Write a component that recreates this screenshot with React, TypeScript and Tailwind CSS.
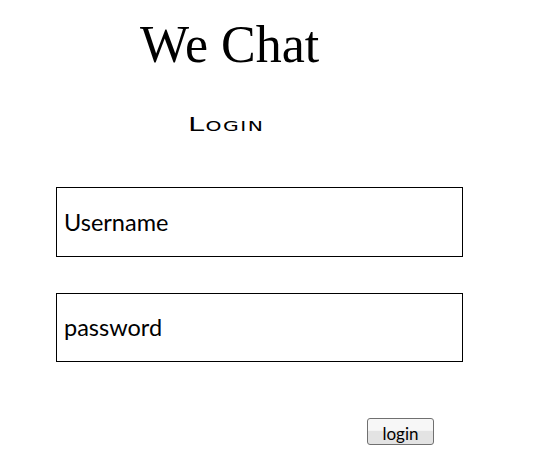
export default function App() {
    return (
        <div className="w-[546px] h-[457px] bg-white text-black">
            <div className="pl-[140px] pt-[15px]">
                <h1 className="font-['Liberation_Serif',serif] text-[52px] leading-[60px]">We Chat</h1>
                <p className="pl-[48px] mt-[37px] h-[24px]">
                    <span className="inline-block origin-left scale-x-[1.45] font-['DejaVu_Sans',sans-serif] text-[20px] leading-[24px] tracking-[1px] [font-variant:small-caps]">
                        Login
                    </span>
                </p>
            </div>
            <div className="pl-[56px] pt-[51px] flex flex-col gap-[36px]">
                <div className="w-[407px] h-[70px] border border-black flex items-center px-[7px]">
                    <span className="font-['Lato',sans-serif] text-[23.5px] pt-[2px]">Username</span>
                </div>
                <div className="w-[407px] h-[69px] border border-black flex items-center px-[7px]">
                    <span className="font-['Lato',sans-serif] text-[23.5px]">password</span>
                </div>
            </div>
            <div className="pl-[367px] pt-[56px]">
                <button className="w-[67px] h-[27px] rounded-[3px] border border-[#707070] bg-[linear-gradient(to_bottom,#f7f7f7_0%,#f7f7f7_45%,#e3e3e3_50%,#e3e3e3_100%)] font-['Lato',sans-serif] text-[17px] leading-[20px] pt-[4px]">
                    login
                </button>
            </div>
        </div>
    );
}
